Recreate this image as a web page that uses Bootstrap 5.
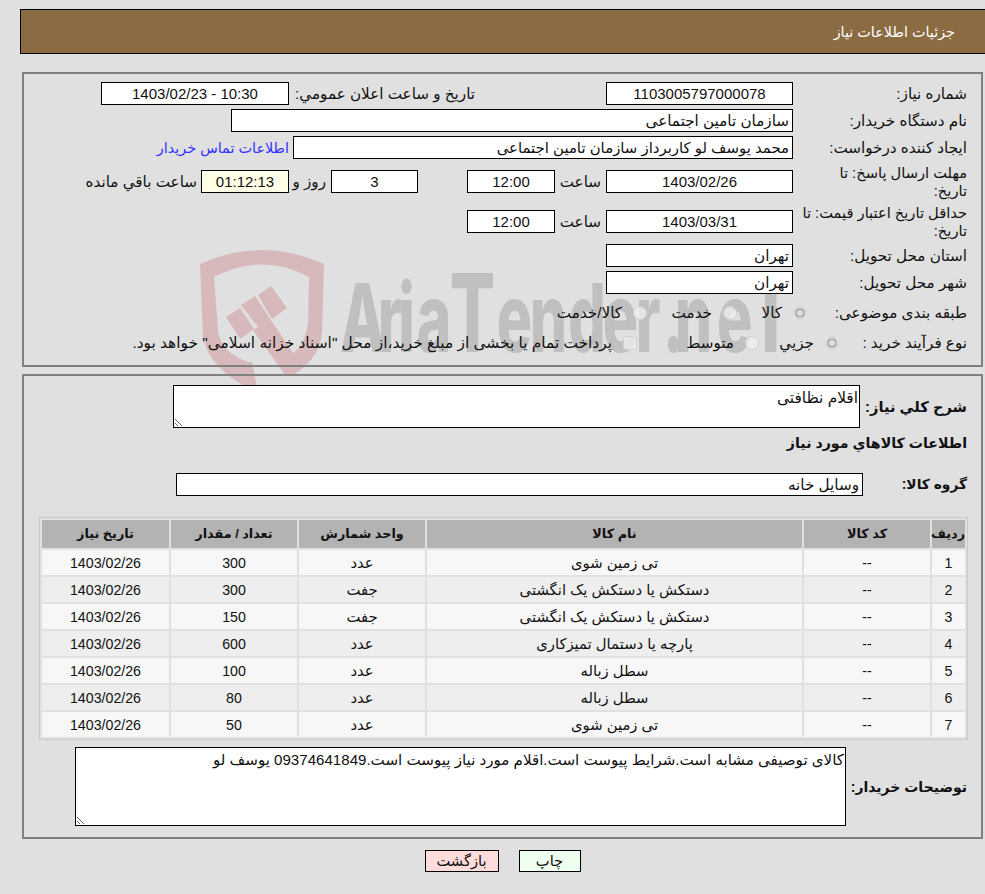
<!DOCTYPE html>
<html lang="fa" dir="rtl">
<head>
  <title>جزئیات اطلاعات نیاز</title>
  <meta charset="utf-8">
  <meta name="viewport" content="width=device-width, initial-scale=1">
  <link href="https://cdn.jsdelivr.net/npm/bootstrap@5.3.2/dist/css/bootstrap.min.css" rel="stylesheet">
  <script src="https://cdn.jsdelivr.net/npm/bootstrap@5.3.2/dist/js/bootstrap.bundle.min.js"></script>
  <style>
    html, body { height: 100%; }
    body { background: #e0e0e0; color: #111; font: 15.2px/18px "Liberation Sans", "DejaVu Sans", sans-serif; overflow: hidden; }
    .wm { position: absolute; top: 0; left: 0; z-index: 0; }
    .wm text { font-family: Inter, sans-serif; font-weight: 800; fill: #c0c0c0; }
    .page { position: relative; z-index: 1; }
    .head-bar { margin: 9px 0 0 20px; height: 45px; background: #8b6b41; border: 1px solid #000; border-right: 0; color: #fff; padding-right: 30px; font-size: 14.4px; }
    .box { margin: 0 2px 0 0; margin-left: 22px; margin-right: 2px; padding-right: 14px; border: 2px solid #808080; }
    .box-a { margin-top: 18px; padding-top: 6px; height: 295px; }
    .box-b { margin-top: 7px; padding-top: 9px; height: 465px; }
    .r27 { height: 27px; }
    .r37 { height: 37px; }
    .r30 { height: 30px; }
    .mt2 { margin-top: 2px; }
    .mt3px { margin-top: 3px; }
    .lbl { width: 174px; flex: none; }
    .lbl-r { width: 170px; margin-left: 4px; flex: none; font-size: 14.67px; white-space: nowrap; }
    .fld { flex: none; height: 23px; border: 1px solid #000; background: #fff; color: #111; font: inherit; font-size: 15px; border-radius: 0; padding: 0 3px; outline: 0; text-align: center; }
    .fld.txt { text-align: right; font-size: 15.2px; }
    .fld.txt.tight { font-size: 14.9px; }
    .w187 { width: 187px; }
    .w88 { width: 88px; }
    .w87 { width: 87px; }
    .w188 { width: 188px; }
    .w500 { width: 500px; }
    .w562 { width: 562px; }
    .w687 { width: 687px; }
    .timer { background: #ffffe8; }
    .buyer-link { color: #3333ff; text-decoration: none; margin-right: 4px; font-size: 14.4px; }
    .pub-lbl { width: 317px; padding-right: 131px; flex: none; }
    .hour-lbl { margin: 0 5px; width: 41px; }
    .day-lbl { width: 42px; padding-right: 5px; flex: none; white-space: nowrap; }
    .left-lbl { margin-right: 4px; white-space: nowrap; }
    .d-gap { margin-right: 49px; }
    .opt { display: flex; align-items: center; flex: none; margin: 0; }
    .opt input { margin: 0 0 0 11px; flex: none; }
    .form-check-input.rb { width: 14px; height: 14px; opacity: 1; border: 1px solid #d2d2d2; background: rgba(240,240,240,.75); border-radius: 50%; }
    .form-check-input.rb:checked { background: radial-gradient(circle, #dedede 0 2.5px, #b5b5b5 3px 5px, #ececec 5.5px); border-color: #d2d2d2; }
    .form-check-input.cb { width: 14px; height: 14px; opacity: 1; border: 1px solid #d2d2d2; background: rgba(240,240,240,.75); border-radius: 3px; }
    .o70 { width: 70px; }
    .o90 { width: 90px; }
    .o80 { width: 80px; }
    .o122 { width: 122px; }
    .lbl-160 { width: 160px; flex: none; }
    .lbl-128 { width: 128px; flex: none; }
    .long-note { font-size: 15.4px; white-space: nowrap; }
    .strong-lbl { font-weight: 700; font-size: 14.67px; white-space: nowrap; }
    .area { display: block; border: 1px solid #000; background: #fff; color: #111; font: inherit; border-radius: 0; padding: 3px 1px 1px 2px; outline: 0; resize: both; flex: none; }
    .area-a { width: 687px; height: 43px; font-size: 15.4px; }
    .area-b { width: 771px; height: 79px; font-size: 15.1px; }
    .gl { width: 107px; flex: none; }
    .gl-a { width: 104px; flex: none; font-size: 13.8px; }
    .dl { width: 121px; flex: none; font-size: 14px; }
    .sect-title { height: 30px; font-size: 14.2px; }
    .group-row { margin-top: 15px; }
    .grid-wrap { margin: 21px -1px 7px 0; width: 929px; border: 1px solid #c8c8c8; }
    .items.table { margin: 0; border-collapse: separate; border-spacing: 2px; width: 927px; table-layout: fixed; }
    .items.table > * > * > * { border: 0; padding: 0; height: 25px; text-align: center; vertical-align: middle; color: #111; background: none; box-shadow: none; font-size: 14.2px; }
    .items.table > tbody > tr > td:nth-child(3), .items.table > tbody > tr > td:nth-child(4) { font-size: 14.8px; }
    .items.table > thead > tr > th { background: #b3b3b3; height: 28px; font-size: 12.8px; }
    .items.table > tbody > tr > td { background: #f7f7f7; }
    .items.table > tbody > tr:nth-child(even) > td { background: #eee; }
    .go-btn { height: 22px; border: 1px solid #000; color: #111; border-radius: 0; padding: 0; font-size: 14.67px; line-height: 20px; }
    .go-print { width: 62px; background: #efffef; }
    .go-back { width: 74px; background: #ffdcdc; }
    .go-print:hover { background: #efffef; color: #111; border-color: #000; }
    .go-back:hover { background: #ffdcdc; color: #111; border-color: #000; }
    .btn-row { margin: 11px 2px 0 22px; column-gap: 20px; }
  </style>
</head>
<body>
<svg class="wm" width="985" height="400" viewBox="0 0 985 400">
  <g fill="#d8b9bb">
    <path d="M293,375 Q320,358 322,333 L324,264 Q262,236 200,264 L203,337 Q208,368 255,392 L258,392 L252,362 L248,362 Q220,352 218,330 L214,277 Q262,252 309,277 L308,323 Q305,345 293,353 Z"/>
    <path d="M226,317 L240,308 L254,329 L240,339 Z"/>
    <path d="M241,305 L255,296 L293,353 L293,375 L285,375 L253,330 L258,327 Z"/>
    <path d="M258,295 L271,286 L287,308 L272,319 Z"/>
  </g>
  <text transform="translate(340,352) scale(.62,1)" font-size="95" direction="ltr" unicode-bidi="bidi-override"><tspan x="0 61 94 124">Aria</tspan><tspan x="177" font-size="108">T</tspan><tspan x="253 306 368 424 477 521 540 608">ender.ne</tspan><tspan x="658" font-size="108">T</tspan></text>
</svg>
<div class="page">
  <div class="head-bar d-flex align-items-center">جزئیات اطلاعات نیاز</div>

  <div class="box box-a">
    <div class="d-flex align-items-center r27">
      <div class="lbl">شماره نیاز:</div>
      <input class="fld w187" readonly value="1103005797000078">
      <div class="pub-lbl">تاریخ و ساعت اعلان عمومي:</div>
      <input class="fld w188" dir="ltr" readonly value="1403/02/23 - 10:30">
    </div>
    <div class="d-flex align-items-center r27">
      <div class="lbl">نام دستگاه خریدار:</div>
      <input class="fld txt w562" readonly value="سازمان تامین اجتماعی">
    </div>
    <div class="d-flex align-items-center r27">
      <div class="lbl">ایجاد کننده درخواست:</div>
      <input class="fld txt tight w500" readonly value="محمد یوسف لو کاربرداز سازمان تامین اجتماعی">
      <a class="buyer-link" href="#">اطلاعات تماس خریدار</a>
    </div>
    <div class="d-flex align-items-center r37 mt2">
      <div class="lbl-r">مهلت ارسال پاسخ: تا<br>تاریخ:</div>
      <input class="fld w187" readonly value="1403/02/26">
      <div class="hour-lbl">ساعت</div>
      <input class="fld w88" readonly value="12:00">
      <input class="fld w87 d-gap" readonly value="3">
      <div class="day-lbl">روز و</div>
      <input class="fld w88 timer" readonly value="01:12:13">
      <div class="left-lbl">ساعت باقي مانده</div>
    </div>
    <div class="d-flex align-items-center r37 mt3px">
      <div class="lbl-r">حداقل تاریخ اعتبار قیمت: تا<br>تاریخ:</div>
      <input class="fld w187" readonly value="1403/03/31">
      <div class="hour-lbl">ساعت</div>
      <input class="fld w88" readonly value="12:00">
    </div>
    <div class="d-flex align-items-center r27 mt2">
      <div class="lbl">استان محل تحویل:</div>
      <input class="fld txt w187" readonly value="تهران">
    </div>
    <div class="d-flex align-items-center r27">
      <div class="lbl">شهر محل تحویل:</div>
      <input class="fld txt w187" readonly value="تهران">
    </div>
    <div class="d-flex align-items-center r30 mt2">
      <div class="lbl-160">طبقه بندی موضوعی:</div>
      <label class="opt o70"><input class="form-check-input rb" type="radio" name="cat" disabled checked><span>کالا</span></label>
      <label class="opt o90"><input class="form-check-input rb" type="radio" name="cat" disabled><span>خدمت</span></label>
      <label class="opt"><input class="form-check-input rb" type="radio" name="cat" disabled><span>کالا/خدمت</span></label>
    </div>
    <div class="d-flex align-items-center r30">
      <div class="lbl-128">نوع فرآیند خرید :</div>
      <label class="opt o80"><input class="form-check-input rb" type="radio" name="proc" disabled checked><span>جزيي</span></label>
      <label class="opt o122"><input class="form-check-input rb" type="radio" name="proc" disabled><span>متوسط</span></label>
      <label class="opt"><input class="form-check-input cb" type="checkbox" disabled><span class="long-note">پرداخت تمام یا بخشی از مبلغ خرید،از محل "اسناد خزانه اسلامی" خواهد بود.</span></label>
    </div>
  </div>

  <div class="box box-b">
    <div class="d-flex align-items-center">
      <div class="gl strong-lbl">شرح كلي نياز:</div>
      <textarea class="area area-a" readonly>اقلام نظافتی</textarea>
    </div>
    <div class="sect-title d-flex align-items-center strong-lbl">اطلاعات كالاهاي مورد نياز</div>
    <div class="d-flex align-items-center group-row">
      <div class="gl-a strong-lbl">گروه کالا:</div>
      <input class="fld txt w687" readonly value="وسایل خانه">
    </div>
    <div class="grid-wrap">
      <table class="table items">
        <colgroup><col style="width:33px"><col style="width:126px"><col style="width:375px"><col style="width:126px"><col style="width:126px"><col></colgroup>
        <thead>
          <tr><th>ردیف</th><th>کد کالا</th><th>نام کالا</th><th>واحد شمارش</th><th>تعداد / مقدار</th><th>تاریخ نیاز</th></tr>
        </thead>
        <tbody>
          <tr><td>1</td><td>--</td><td>تی زمین شوی</td><td>عدد</td><td>300</td><td>1403/02/26</td></tr>
          <tr><td>2</td><td>--</td><td>دستکش یا دستکش یک انگشتی</td><td>جفت</td><td>300</td><td>1403/02/26</td></tr>
          <tr><td>3</td><td>--</td><td>دستکش یا دستکش یک انگشتی</td><td>جفت</td><td>150</td><td>1403/02/26</td></tr>
          <tr><td>4</td><td>--</td><td>پارچه یا دستمال تمیزکاری</td><td>عدد</td><td>600</td><td>1403/02/26</td></tr>
          <tr><td>5</td><td>--</td><td>سطل زباله</td><td>عدد</td><td>100</td><td>1403/02/26</td></tr>
          <tr><td>6</td><td>--</td><td>سطل زباله</td><td>عدد</td><td>80</td><td>1403/02/26</td></tr>
          <tr><td>7</td><td>--</td><td>تی زمین شوی</td><td>عدد</td><td>50</td><td>1403/02/26</td></tr>
        </tbody>
      </table>
    </div>
    <div class="d-flex align-items-center">
      <div class="dl strong-lbl">توضیحات خریدار:</div>
      <textarea class="area area-b" readonly>کالای توصیفی مشابه است.شرایط پیوست است.اقلام مورد نیاز پیوست است.09374641849 یوسف لو</textarea>
    </div>
  </div>

  <div class="btn-row d-flex justify-content-center">
    <button type="button" class="btn go-btn go-print">چاپ</button>
    <button type="button" class="btn go-btn go-back">بازگشت</button>
  </div>
</div>
</body>
</html>
